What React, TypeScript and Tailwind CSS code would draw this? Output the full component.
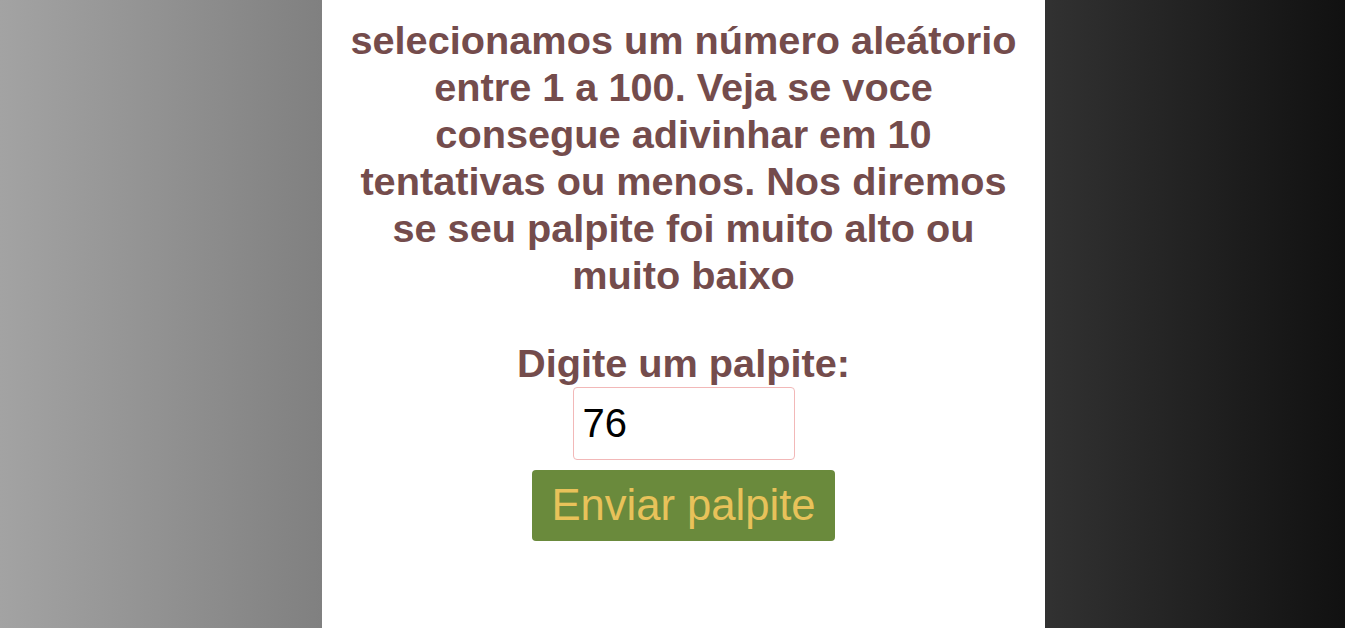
export default function App() {
  return (
    <div className="min-h-screen w-full bg-[linear-gradient(to_right,#a3a3a3,#111111)] font-['Liberation_Sans',Arial,sans-serif]">
      <div className="ml-[322px] w-[723px] min-h-[628px] bg-white px-[24px] pt-[17px] text-center">
        <p className="text-[39.7px] leading-[47px] font-bold text-[#744c4c]">
          selecionamos um número aleátorio entre 1 a 100. Veja se voce consegue adivinhar em 10 tentativas ou menos. Nos diremos se seu palpite foi muito alto ou muito baixo
        </p>

        <div className="mt-[41px] flex flex-col items-center">
          <label htmlFor="palpite" className="text-[39.7px] leading-[47px] font-bold text-[#744c4c]">
            Digite um palpite:
          </label>
          <input
            id="palpite"
            type="text"
            defaultValue="76"
            className="w-[222px] h-[73px] border border-[#f2b8b8] rounded-[4px] px-[9px] text-[40px] text-black outline-none"
          />
          <button className="mt-[10px] h-[71px] px-[19px] rounded-[4px] bg-[#6a8a3c] text-[43.6px] text-[#e8c25a]">
            Enviar palpite
          </button>
        </div>
      </div>
    </div>
  );
}
